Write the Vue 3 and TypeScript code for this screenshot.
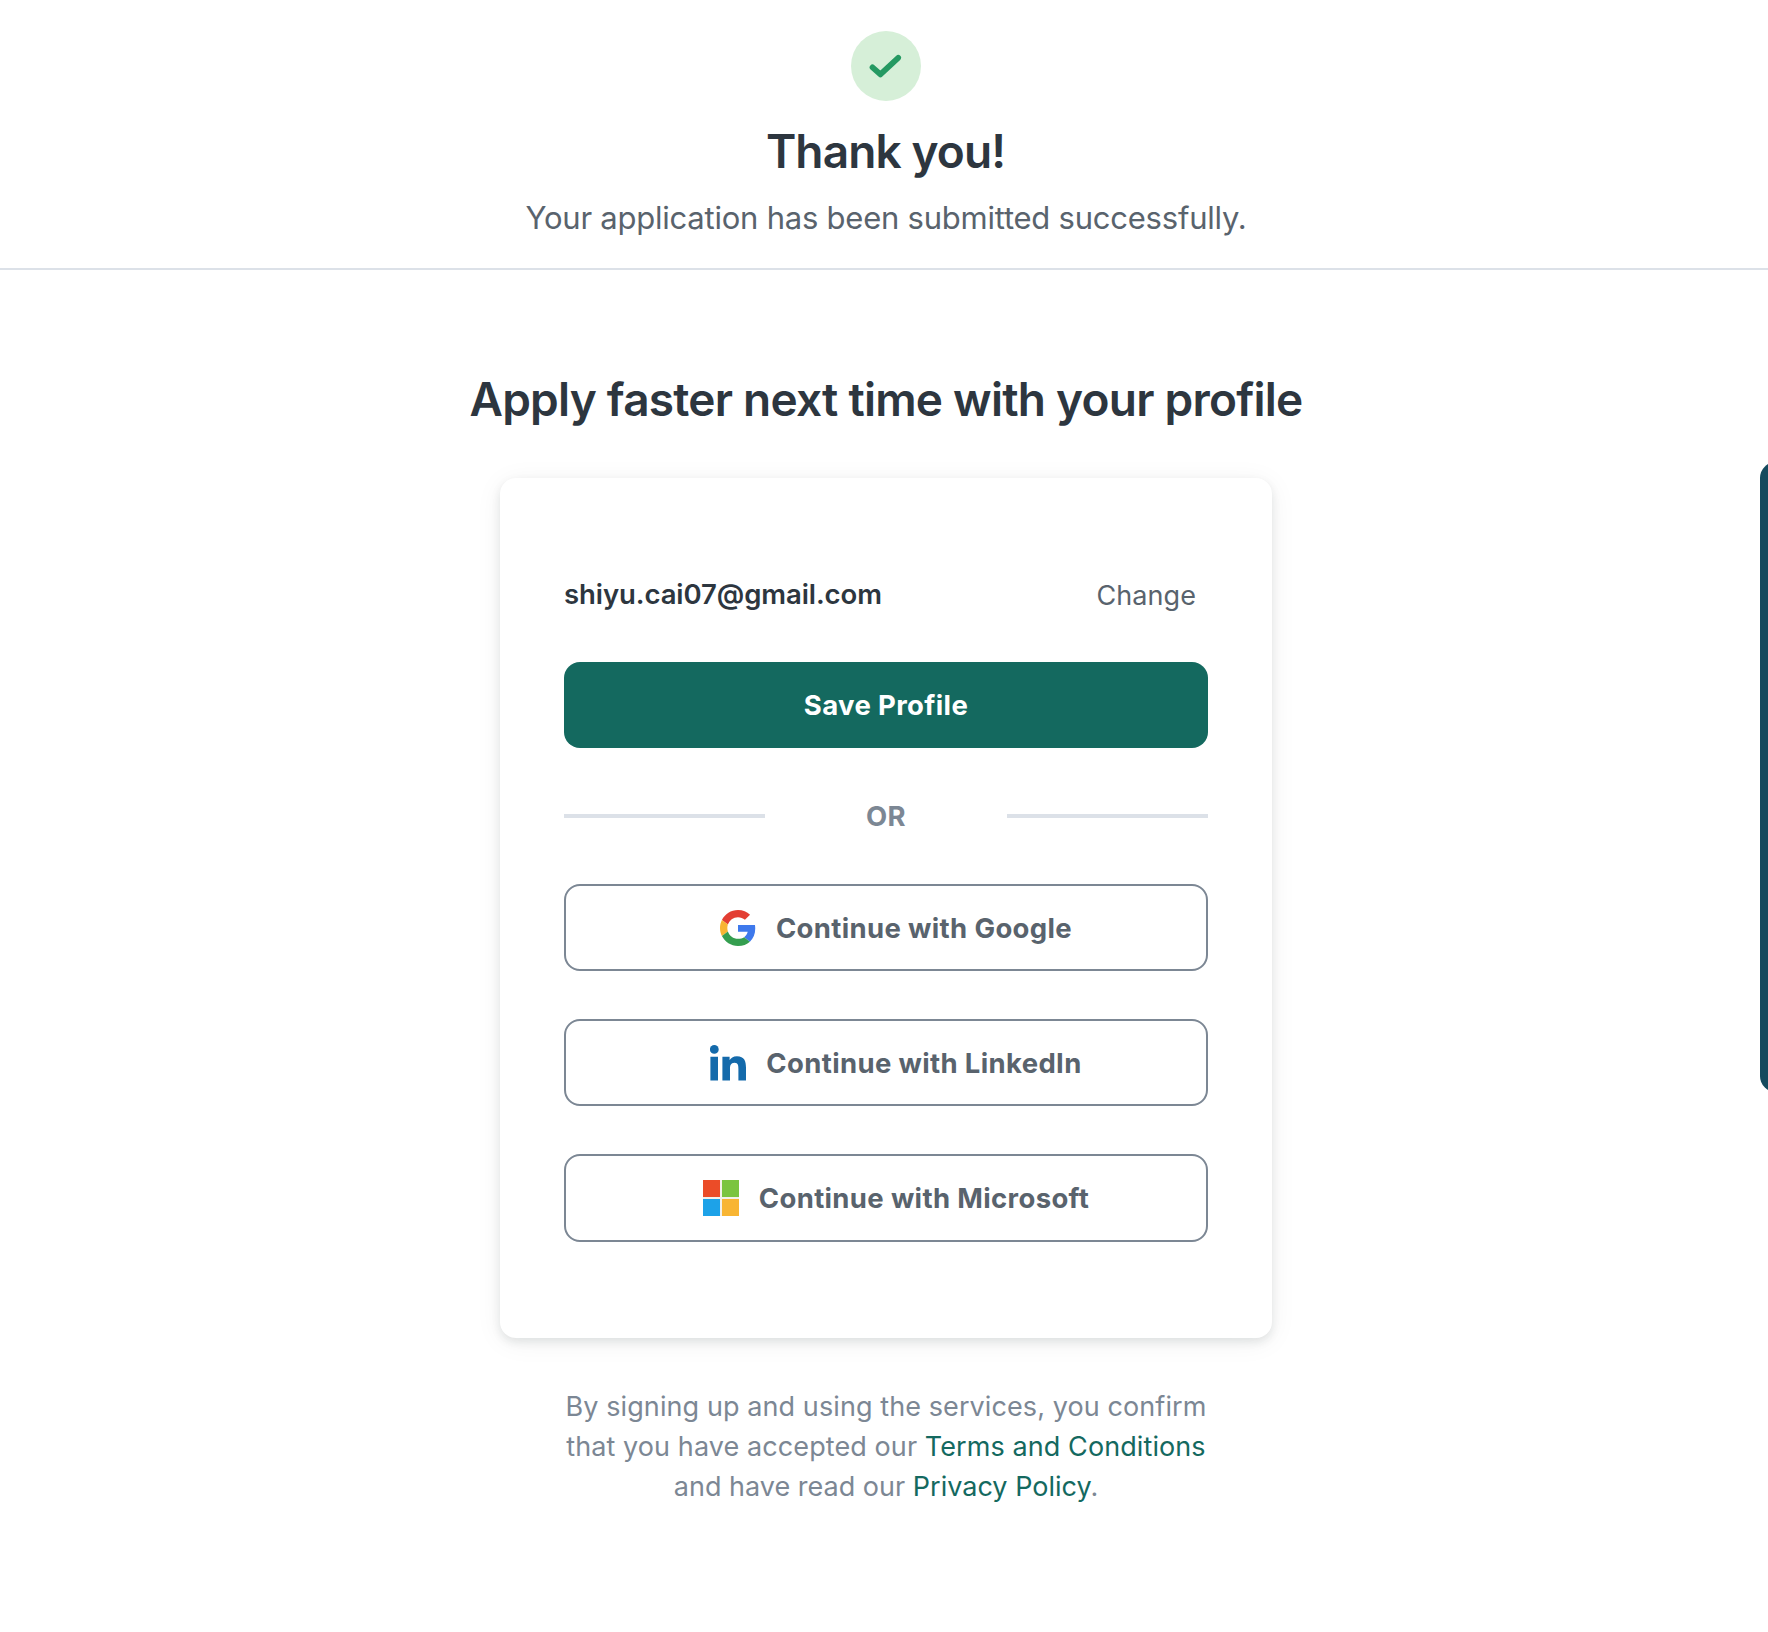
<script setup lang="ts">
interface Provider {
  id: 'google' | 'linkedin' | 'microsoft'
  name: string
}

const email = 'shiyu.cai07@gmail.com'
const providers: Provider[] = [
  { id: 'google', name: 'Google' },
  { id: 'linkedin', name: 'LinkedIn' },
  { id: 'microsoft', name: 'Microsoft' },
]
</script>

<template>
  <div class="page">
    <header class="confirmation">
      <svg class="badge" viewBox="0 0 70 70" aria-hidden="true">
        <circle cx="35" cy="35" r="35" fill="#d6efd8" />
        <path d="M21.5 36.3 29.4 43.4 47.2 26.8" fill="none" stroke="#259962" stroke-width="5.7" stroke-linecap="round" stroke-linejoin="round" />
      </svg>
      <h1>Thank you!</h1>
      <p class="subtitle">Your application has been submitted successfully.</p>
    </header>

    <main class="signup">
      <h2>Apply faster next time with your profile</h2>

      <section class="card">
        <div class="account">
          <span class="email">{{ email }}</span>
          <a class="change">Change</a>
        </div>
        <button class="save" type="button">Save Profile</button>
        <div class="divider"><i></i><span>OR</span><i></i></div>
        <div class="providers">
          <button v-for="p in providers" :key="p.id" type="button" class="provider" :class="p.id">
            <svg v-if="p.id === 'google'" class="logo" viewBox="0 0 48 48" aria-hidden="true">
              <path fill="#e33e33" d="M24 9.5c3.54 0 6.71 1.22 9.21 3.6l6.85-6.85C35.9 2.38 30.47 0 24 0 14.62 0 6.51 5.38 2.56 13.22l7.98 6.19C12.43 13.72 17.74 9.5 24 9.5z" />
              <path fill="#3e79ec" d="M46.98 24.55c0-1.57-.15-3.09-.38-4.55H24v9.02h12.94c-.58 2.96-2.26 5.48-4.78 7.18l7.73 6c4.51-4.18 7.09-10.36 7.09-17.65z" />
              <path fill="#f8b533" d="M10.53 28.59c-.48-1.45-.76-2.99-.76-4.59s.27-3.14.76-4.59l-7.98-6.19C.92 16.46 0 20.12 0 24c0 3.88.92 7.54 2.56 10.78l7.97-6.19z" />
              <path fill="#349e4f" d="M24 48c6.48 0 11.93-2.13 15.89-5.81l-7.73-6c-2.15 1.45-4.92 2.3-8.16 2.3-6.26 0-11.57-4.22-13.47-9.91l-7.98 6.19C6.51 42.62 14.62 48 24 48z" />
            </svg>
            <svg v-else-if="p.id === 'linkedin'" class="logo" viewBox="0 0 36 36" fill="#146aab" aria-hidden="true">
              <circle cx="4.3" cy="4.4" r="4.4" />
              <path d="M.4 11.8h7.6v23.8H.4zM12.4 11.8h7.2v3.3h.1c1-1.9 3.5-3.9 7.2-3.9 7.6 0 9.1 5 9.1 11.5v12.9h-7.6V24c0-2.8 0-6.3-3.9-6.3S20 20.8 20 23.9v11.7h-7.6z" />
            </svg>
            <svg v-else class="logo" viewBox="0 0 36 36" aria-hidden="true">
              <path fill="#f3f0ea" d="M0 0h36v36H0z" />
              <path fill="#eb4c28" d="M0 0h17v17H0z" />
              <path fill="#7bc43f" d="M19 0h17v17H19z" />
              <path fill="#1da2e8" d="M0 19h17v17H0z" />
              <path fill="#f8b533" d="M19 19h17v17H19z" />
            </svg>
            <span>Continue with {{ p.name }}</span>
          </button>
        </div>
      </section>

      <p class="legal">
        By signing up and using the services, you confirm<br />
        that you have accepted our <a>Terms and Conditions</a><br />
        <span class="last">and have read our <a>Privacy Policy</a>.</span>
      </p>
    </main>

    <aside class="side-tab"></aside>
  </div>
</template>

<style>
html,
body {
  margin: 0;
  background: #fff;
  overflow: hidden;
}
</style>

<style scoped>
.page {
  position: relative;
  height: 1632px;
  overflow: hidden;
  font-family: Inter, "Liberation Sans", sans-serif;
  color: #2d363f;
}
.confirmation {
  box-sizing: border-box;
  height: 270px;
  padding: 31px 0 0 4px;
  display: flex;
  flex-direction: column;
  align-items: center;
  border-bottom: 2px solid #dce1e8;
}
.badge {
  width: 70px;
  height: 70px;
  flex: none;
}
h1,
h2,
p {
  margin: 0;
  white-space: nowrap;
}
h1,
h2 {
  font-size: 46px;
  line-height: 56px;
  font-weight: 600;
}
h1 {
  margin-top: 22px;
  padding-right: 1px;
  letter-spacing: -0.88px;
}
h2 {
  letter-spacing: -0.76px;
}
.subtitle {
  margin-top: 19px;
  font-size: 31px;
  line-height: 39px;
  letter-spacing: -0.23px;
  color: #59636d;
}
.signup {
  padding: 101px 0 0 4px;
  display: flex;
  flex-direction: column;
  align-items: center;
}
.card {
  box-sizing: border-box;
  width: 772px;
  height: 860px;
  margin-top: 51px;
  padding: 96px 64px;
  border-radius: 16px;
  background: #fff;
  box-shadow: 0 4px 10px rgba(20, 40, 40, 0.1), 0 4px 28px rgba(20, 40, 40, 0.06);
}
.account {
  display: flex;
  justify-content: space-between;
  height: 40px;
  line-height: 40px;
}
.email {
  font-size: 27.5px;
  font-weight: 600;
  letter-spacing: -0.08px;
}
.change {
  padding: 2px 12px 0 0;
  font-size: 27px;
  letter-spacing: 0.07px;
  color: #59636d;
}
button {
  box-sizing: border-box;
  display: flex;
  align-items: center;
  justify-content: center;
  width: 100%;
  height: 87px;
  padding: 0;
  border: 2px solid #7c8794;
  border-radius: 16px;
  background: #fff;
  font-family: inherit;
  font-size: 27.5px;
  font-weight: 700;
  line-height: 40px;
  letter-spacing: 0.35px;
  color: #59636d;
}
.save {
  height: 86px;
  margin-top: 48px;
  border: 0;
  background: #14695f;
  color: #fff;
}
.divider {
  display: flex;
  align-items: center;
  justify-content: space-between;
  height: 40px;
  margin: 48px 0;
  font-size: 27.5px;
  line-height: 40px;
  font-weight: 700;
  letter-spacing: 0.3px;
  color: #7c8794;
}
.divider i {
  width: 201px;
  height: 4px;
  background: #dce1e8;
}
.providers {
  display: flex;
  flex-direction: column;
  gap: 48px;
}
.provider {
  gap: 20px;
  padding-left: 20px;
}
.microsoft {
  height: 88px;
}
.logo {
  width: 36px;
  height: 36px;
  flex: none;
}
.legal {
  margin-top: 49px;
  text-align: center;
  font-size: 27px;
  line-height: 40px;
  letter-spacing: 0.09px;
  color: #7c8794;
}
.legal a {
  color: #14695f;
}
.last {
  letter-spacing: 0.01px;
}
.side-tab {
  position: absolute;
  top: 462px;
  right: 0;
  width: 8px;
  height: 630px;
  overflow: hidden;
}
.side-tab::before {
  content: "";
  display: block;
  width: 40px;
  height: 100%;
  border-radius: 16px;
  background: #154a5e;
}
</style>
